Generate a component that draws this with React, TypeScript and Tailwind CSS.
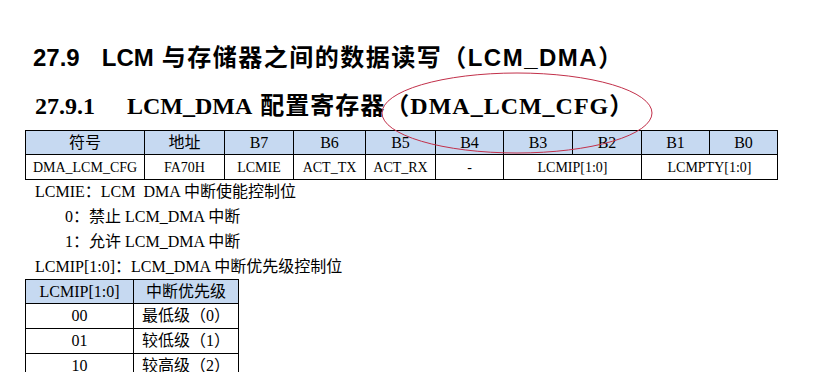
const serif = "font-['Liberation_Serif','Noto_Sans_CJK_SC',serif]";

const headCells = ['符号', '地址', 'B7', 'B6', 'B5', 'B4', 'B3', 'B2', 'B1', 'B0'];

const RegTable = () => (
  <div
    className={`grid w-fit grid-cols-[118px_79px_68px_71px_69px_67px_68px_68px_67px_67px] grid-rows-[23px_24px] gap-px bg-black p-px text-black ${serif}`}
  >
    {headCells.map((h) => (
      <div key={h} className="flex items-center justify-center bg-[#c6d9f1] text-[16px]">
        {h}
      </div>
    ))}
    <div className="flex items-center justify-center bg-white text-[14px]">DMA_LCM_CFG</div>
    <div className="flex items-center justify-center bg-white text-[14px]">FA70H</div>
    <div className="flex items-center justify-center bg-white text-[14px]">LCMIE</div>
    <div className="flex items-center justify-center bg-white text-[14px]">ACT_TX</div>
    <div className="flex items-center justify-center bg-white text-[14px]">ACT_RX</div>
    <div className="flex items-center justify-center bg-white text-[14px]">-</div>
    <div className="col-span-2 flex items-center justify-center bg-white text-[14px]">LCMIP[1:0]</div>
    <div className="col-span-2 flex items-center justify-center bg-white text-[14px]">LCMPTY[1:0]</div>
  </div>
);

// only the rows that show inside the window
const priorities = [
  ['00', '最低级（0）'],
  ['01', '较低级（1）'],
  ['10', '较高级（2）'],
];

const PriorityTable = () => (
  <div
    className={`grid w-fit grid-cols-[107px_104px] grid-rows-[23px_24px_24px_24px] gap-px bg-black p-px text-[16px] text-black ${serif}`}
  >
    <div className="flex items-center justify-center bg-[#c6d9f1]">LCMIP[1:0]</div>
    <div className="flex items-center justify-center bg-[#c6d9f1]">中断优先级</div>
    {priorities.map(([v, p]) => (
      <div key={v} className="contents">
        <div className="flex items-center justify-center bg-white">{v}</div>
        <div className="flex items-center justify-center bg-white">{p}</div>
      </div>
    ))}
  </div>
);

export default function App() {
  return (
    <div className="relative h-[372px] w-[814px] overflow-hidden bg-white text-black">
      <div className="pl-[25px]">
        <h1 className="mt-[42px] flex h-[32px] items-center pl-[8px] font-['Liberation_Sans','Noto_Sans_CJK_SC',sans-serif] text-[24px] font-bold leading-[32px]">
          <span>27.9</span>
          <span className="ml-[22px]">LCM</span>
          <span className="ml-[8px] tracking-[1.5px]">与存储器之间的数据读写（LCM_DMA）</span>
        </h1>
        <h2 className={`mt-[16px] flex h-[32px] items-center pl-[10px] text-[24px] font-bold leading-[32px] ${serif}`}>
          <span>27.9.1</span>
          <span className="ml-[32px]">LCM_DMA</span>
          <span className="ml-[8px] tracking-[1px]">配置寄存器（DMA_LCM_CFG）</span>
        </h2>

        <div className="mt-[8px]">
          <RegTable />
        </div>

        <div className={`text-[16px] ${serif}`}>
          <p className="pl-[10px] leading-[24px]">LCMIE：LCM {'\u00a0'}DMA 中断使能控制位</p>
          <p className="pl-[40px] leading-[25px]">0：禁止 LCM_DMA 中断</p>
          <p className="pl-[40px] leading-[25px]">1：允许 LCM_DMA 中断</p>
          <p className="pl-[10px] leading-[25px]">LCMIP[1:0]：LCM_DMA 中断优先级控制位</p>
        </div>

        <div>
          <PriorityTable />
        </div>
      </div>

      {/* hand-drawn annotation circle */}
      <svg className="pointer-events-none absolute left-[380px] top-[71px]" width="274" height="84" viewBox="0 0 274 84">
        <ellipse cx="137" cy="42" rx="135" ry="40" fill="none" stroke="#c2304a" strokeWidth="1" />
      </svg>
    </div>
  );
}
